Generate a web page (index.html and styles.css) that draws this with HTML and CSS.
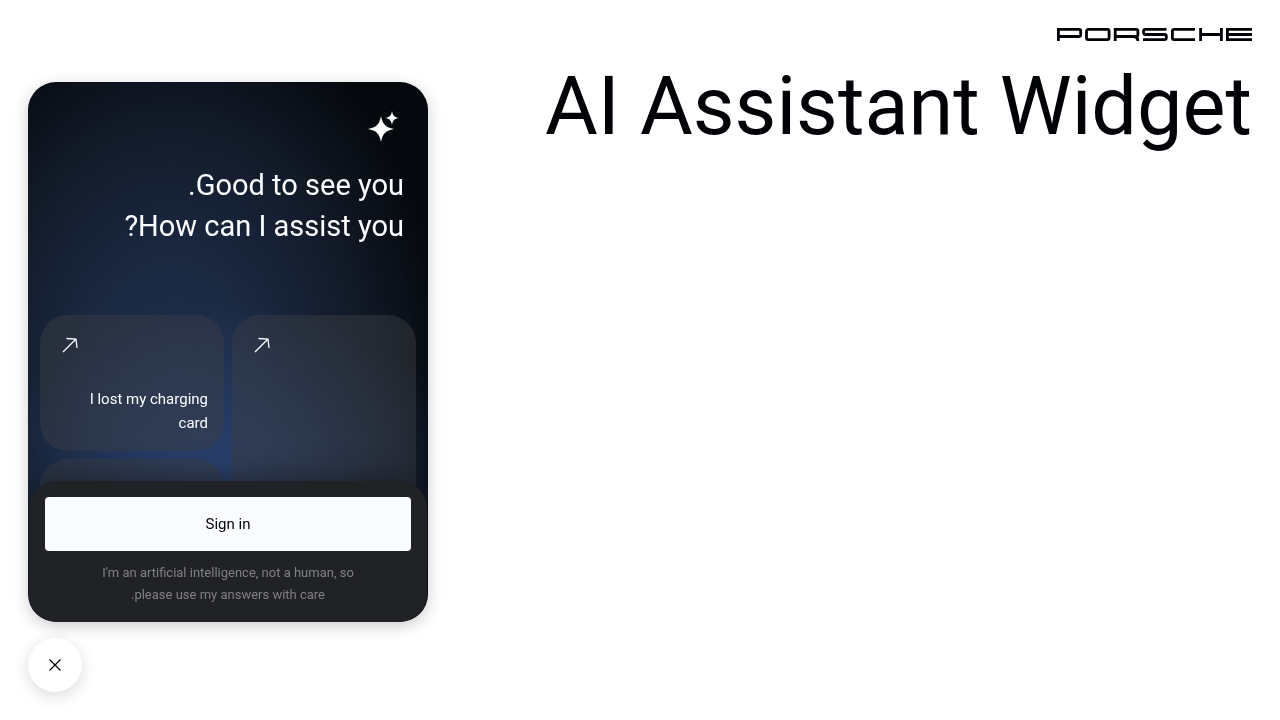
FILE: index.html
```html
<!DOCTYPE html>
<html lang="en" dir="rtl">
<head>
<meta charset="utf-8">
<meta name="viewport" content="width=device-width, initial-scale=1">
<title>AI Assistant Widget</title>
<link rel="stylesheet" href="styles.css">
</head>
<body>
<main class="page">
  <svg class="logo" viewBox="0 0 195 13" role="img" aria-label="Porsche">
    <g fill="none" stroke="currentColor" stroke-width="2.8">
      <path d="M1.4 13V1.400H22Q23.700 1.400 23.700 3V6.800Q23.700 8.500 22 8.500H1.400"/>
      <rect x="29.500" y="1.400" width="22.600" height="10.200" rx="1.800"/>
      <path d="M58.200 13V1.400H79.200Q80.900 1.400 80.900 3V6.800Q80.900 8.500 79.200 8.500H58.200M77.500 8.500Q80.900 9 80.900 13"/>
      <path d="M109.500 1.400H88.400Q86.600 1.400 86.600 3V4.800Q86.600 6.500 88.400 6.500H107.500Q109.300 6.500 109.300 8.200V10Q109.300 11.600 107.500 11.600H86"/>
      <path d="M138 1.400H117.200Q115.400 1.400 115.400 3V10Q115.400 11.600 117.200 11.600H138"/>
      <path d="M143.600 0V13M164.400 0V13M143.600 6.500H164.400"/>
      <path d="M195 1.400H170.400V11.600H195M170.400 6.500H195"/>
    </g>
  </svg>
  <h1 class="title">AI Assistant Widget</h1>
</main>

<aside class="widget" aria-label="AI Assistant">
  <section class="panel">
    <div class="content">
      <svg class="sparkle" viewBox="0 0 32 32" aria-hidden="true">
        <path d="M13 5C14.600 13.400 17.600 16.400 26 18C17.600 19.600 14.600 22.600 13 31C11.400 22.600 8.400 19.600 0 18C8.400 16.400 11.400 13.400 13 5Z"/>
        <path d="M24 0C24.800 4.600 26.400 6.200 31 7C26.400 7.800 24.800 9.400 24 14C23.200 9.400 21.600 7.800 17 7C21.600 6.200 23.200 4.600 24 0Z"/>
      </svg>
      <h2 class="greeting">Good to see you.<br>How can I assist you?</h2>
      <div class="prompts">
        <button class="prompt prompt-tall" type="button" aria-label="Suggestion">
          <svg class="arrow" viewBox="0 0 16 16" aria-hidden="true"><path d="M1 15L14 2M4.500 1.500L14 2L15 11"/></svg>
        </button>
        <button class="prompt" type="button">
          <svg class="arrow" viewBox="0 0 16 16" aria-hidden="true"><path d="M1 15L14 2M4.500 1.500L14 2L15 11"/></svg>
          <span>I lost my charging card</span>
        </button>
        <button class="prompt" type="button" aria-label="Suggestion"></button>
      </div>
    </div>
    <footer class="footer">
      <button class="sign-in" type="button">Sign in</button>
      <p class="note">I'm an artificial intelligence, not a human, so please use my answers with care.</p>
    </footer>
  </section>
  <button class="toggle" type="button" aria-label="Close">
    <svg viewBox="0 0 12 12" aria-hidden="true"><path d="M.5 .5L11.500 11.500M11.500 .5L.5 11.500"/></svg>
  </button>
</aside>
</body>
</html>
```
FILE: styles.css
```css
* {
  box-sizing: border-box;
}

body {
  margin: 0;
  background: #fff;
  color: #010205;
  font-family: "Roboto", "Liberation Sans", sans-serif;
}

button {
  font-family: inherit;
}

.page {
  padding: 28px;
}

.logo {
  display: block;
  width: 195px;
  height: 13px;
}

.title {
  margin: 10px 0 0;
  font-size: 81px;
  font-weight: 400;
  line-height: 112px;
}

.widget {
  position: fixed;
  left: 28px;
  bottom: 28px;
  display: flex;
  flex-direction: column;
  align-items: flex-end;
  gap: 16px;
  width: 400px;
  max-width: calc(100vw - 56px);
}

.panel {
  display: flex;
  flex-direction: column;
  width: 100%;
  height: calc(100vh - 180px);
  max-height: 640px;
  overflow: hidden;
  border-radius: 28px;
  background:
    radial-gradient(250px 190px at 50% 76%, rgba(52, 86, 148, .6), rgba(48, 80, 140, 0)),
    radial-gradient(280px 390px at 36% 56%, #1e2e4c, #1b2942 30%, #121a28 68%, #05080d);
  box-shadow: 0 4px 16px rgba(0, 0, 0, .2);
}

.content {
  display: flex;
  flex: 1;
  flex-direction: column;
  min-height: 0;
  padding: 29px 12px 0;
  overflow: hidden;
  color: #fbfcff;
}

.sparkle {
  flex: none;
  width: 32px;
  height: 32px;
  margin: 0 16px;
  fill: #fff;
}

.greeting {
  margin: 22px 12px 68px;
  font-size: 29px;
  font-weight: 400;
  line-height: 41px;
}

.prompts {
  display: grid;
  grid-template-columns: 1fr 1fr;
  grid-auto-rows: 136px;
  flex: none;
  gap: 8px;
}

.prompt {
  display: flex;
  flex-direction: column;
  justify-content: space-between;
  padding: 22px 16px 16px 22px;
  border: 0;
  border-radius: 28px;
  background: rgba(60, 61, 68, .47);
  color: #fbfcff;
  font-size: 15px;
  line-height: 24px;
  text-align: start;
}

.prompt-tall {
  grid-row: span 2;
}

.arrow {
  align-self: flex-end;
  width: 16px;
  height: 16px;
  fill: none;
  stroke: currentColor;
  stroke-width: 1.3;
}

.footer {
  position: relative;
  flex: none;
  display: flex;
  flex-direction: column;
  gap: 11px;
  margin: -28px 1px 0;
  padding: 16px;
  border-radius: 28px;
  background: #212225;
  box-shadow: 0 -4px 28px rgba(20, 22, 28, .6);
}

.sign-in {
  height: 54px;
  border: 0;
  border-radius: 4px;
  background: #fbfcff;
  color: #010205;
  font-size: 15px;
}

.note {
  margin: 0 48px;
  color: #7f8084;
  font-size: 13px;
  line-height: 22px;
  text-align: center;
}

.toggle {
  display: grid;
  place-items: center;
  width: 54px;
  height: 54px;
  padding: 0;
  border: 0;
  border-radius: 50%;
  background: #fff;
  box-shadow: 0 4px 16px rgba(0, 0, 0, .15);
}

.toggle svg {
  width: 12px;
  height: 12px;
  fill: none;
  stroke: #010205;
  stroke-width: 1.2;
}
```
